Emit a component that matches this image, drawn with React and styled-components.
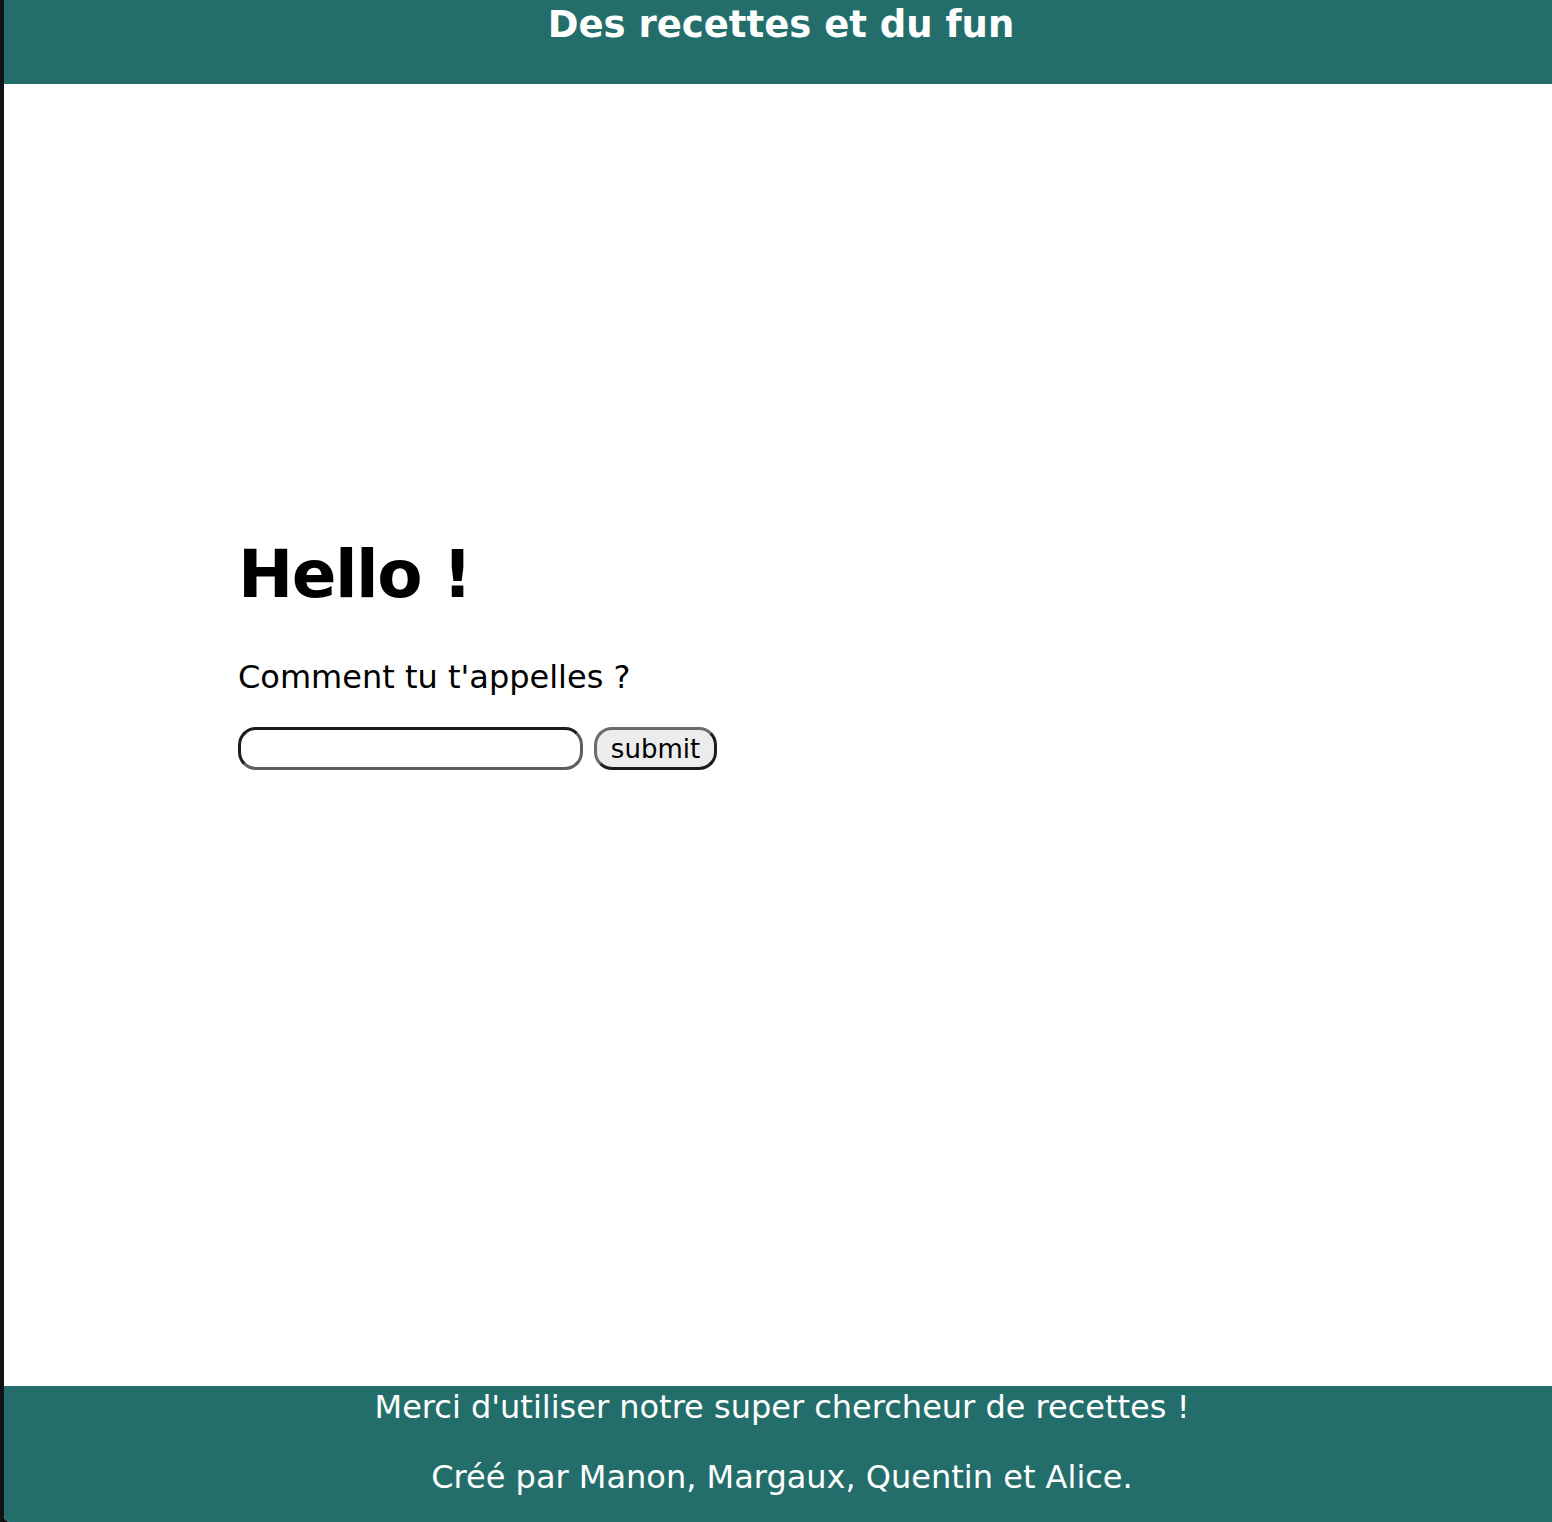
import React from "react";
import styled, { createGlobalStyle } from "styled-components";

const Global = createGlobalStyle`
  html, body { margin: 0; padding: 0; background: #0d0d0f; }
  body { font-family: "DejaVu Sans", Verdana, sans-serif; }
`;

const Page = styled.div`
  display: flex;
  min-height: 1522px;
  background: #0d0d0f;
`;

const Edge = styled.div`
  width: 4px;
  flex: none;
  background: #111216;
`;

const Frame = styled.div`
  flex: 1;
  display: flex;
  flex-direction: column;
  background: #ffffff;
  border-bottom-left-radius: 6px;
  overflow: hidden;
`;

const Header = styled.header`
  height: 84px;
  background: #236e6b;
  display: flex;
  justify-content: center;
`;

const SiteTitle = styled.h1`
  margin: 0;
  color: #ffffff;
  font-size: 37px;
  font-weight: bold;
  line-height: 50px;
  padding-left: 6px;
`;

const Main = styled.main`
  flex: 1;
  padding: 452px 0 0 234px;
`;

const Hello = styled.h2`
  margin: 0;
  font-size: 66px;
  font-weight: bold;
  line-height: 78px;
  letter-spacing: -1.5px;
  color: #000;
`;

const Question = styled.p`
  margin: 43px 0 0;
  font-size: 32px;
  line-height: 40px;
  color: #000;
`;

const Form = styled.form`
  display: flex;
  gap: 11px;
  margin-top: 30px;
`;

const NameInput = styled.input`
  box-sizing: border-box;
  width: 345px;
  height: 43px;
  border-radius: 18px;
  border: 3px solid;
  border-color: #1c1c1c #5e5e5e #5e5e5e #1c1c1c;
  background: #fff;
  outline: none;
`;

const Submit = styled.button`
  box-sizing: border-box;
  width: 123px;
  height: 43px;
  border-radius: 18px;
  border: 3px solid;
  border-color: #6b6b6b #1c1c1c #1c1c1c #6b6b6b;
  background: #ececec;
  font-family: "DejaVu Sans", Verdana, sans-serif;
  font-size: 26px;
  color: #000;
  padding: 0;
  line-height: 36px;
`;

const Footer = styled.footer`
  height: 136px;
  background: #236e6b;
  color: #fff;
  display: flex;
  flex-direction: column;
  align-items: center;
`;

const FooterLine = styled.p`
  margin: 0;
  font-size: 32px;
  line-height: 40px;
  padding-left: 8px;
  margin-top: ${(p) => p.$gap}px;
`;

export default function App() {
  return (
    <>
      <Global />
      <Page>
        <Edge />
        <Frame>
          <Header>
            <SiteTitle>Des recettes et du fun</SiteTitle>
          </Header>
          <Main>
            <Hello>Hello !</Hello>
            <Question>Comment tu t'appelles ?</Question>
            <Form onSubmit={(e) => e.preventDefault()}>
              <NameInput type="text" />
              <Submit type="submit">submit</Submit>
            </Form>
          </Main>
          <Footer>
            <FooterLine $gap={1}>Merci d'utiliser notre super chercheur de recettes !</FooterLine>
            <FooterLine $gap={30}>Créé par Manon, Margaux, Quentin et Alice.</FooterLine>
          </Footer>
        </Frame>
      </Page>
    </>
  );
}
